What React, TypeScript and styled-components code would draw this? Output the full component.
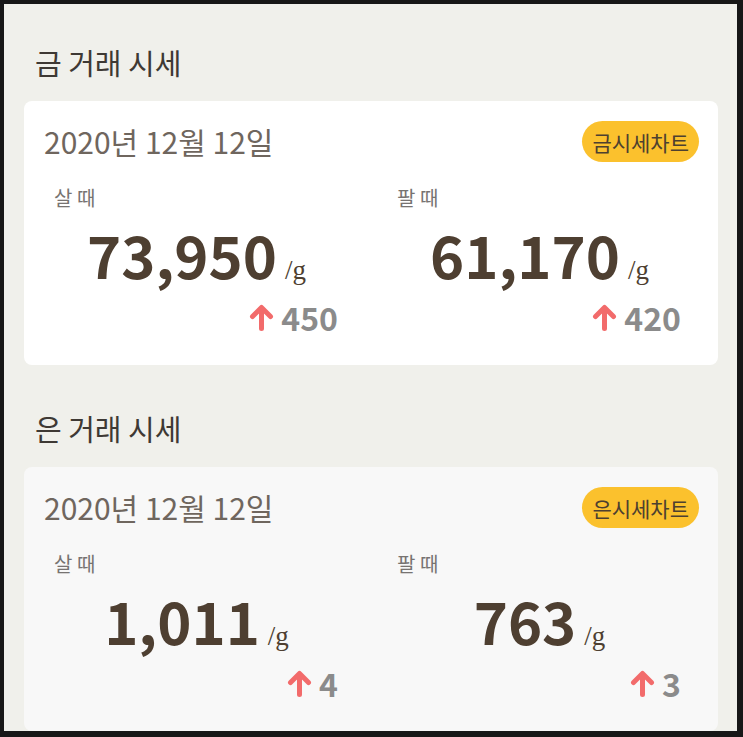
import styled, { createGlobalStyle } from 'styled-components'

const GlobalStyle = createGlobalStyle`
  html, body {
    margin: 0;
    padding: 0;
    background: #171717;
  }
  body {
    font-family: 'Noto Sans CJK KR', 'Noto Sans', sans-serif;
  }
`

const Screen = styled.div`
  box-sizing: border-box;
  margin: 4px 6px 0 4px;
  height: 727px;
  overflow: hidden;
  background: #f0f0eb;
  padding: 40px 19px 0 20px;
  display: flex;
  flex-direction: column;
  gap: 45px;
`

const Section = styled.section`
  display: flex;
  flex-direction: column;
`

const Title = styled.h2`
  margin: 0 0 21px 11px;
  font-size: 29px;
  line-height: 36px;
  font-weight: 400;
  color: #3e3934;
`

interface CardProps {
  muted?: boolean
}

const Card = styled.div<CardProps>`
  box-sizing: border-box;
  border-radius: 8px;
  padding: 20px 19px 30px 20px;
  background: ${(props) => (props.muted ? '#f8f8f8' : '#ffffff')};
`

const CardHeader = styled.div`
  display: flex;
  justify-content: space-between;
  align-items: center;
  height: 41px;
`

const DateText = styled.div`
  font-size: 30px;
  line-height: 41px;
  color: #6f665e;
`

const Chip = styled.button`
  height: 41px;
  padding: 0 10px;
  border: none;
  border-radius: 21px;
  background: #fbc12d;
  color: #4d4030;
  font-family: 'Noto Sans CJK KR', sans-serif;
  font-size: 21px;
  cursor: pointer;
`

const Columns = styled.div`
  display: grid;
  grid-template-columns: 305px 305px;
  column-gap: 38px;
`

const Column = styled.div`
  display: flex;
  flex-direction: column;
`

const Label = styled.div`
  margin-top: 24px;
  padding-left: 10px;
  font-size: 20px;
  line-height: 24px;
  color: #777371;
`

const PriceRow = styled.div`
  margin-top: 9px;
  height: 70px;
  display: flex;
  justify-content: center;
  align-items: baseline;
  gap: 8px;
  color: #4e3f31;
`

const Price = styled.span`
  font-family: 'Noto Sans CJK KR', sans-serif;
  font-weight: 700;
  font-size: 58px;
  line-height: 70px;
`

const Unit = styled.span`
  font-family: 'Liberation Serif', serif;
  font-size: 27px;
`

const ChangeRow = styled.div`
  margin-top: 10px;
  height: 36px;
  padding-right: 11px;
  display: flex;
  justify-content: flex-end;
  align-items: center;
  gap: 7px;
`

const ChangeValue = styled.span`
  font-family: 'Noto Sans CJK KR', sans-serif;
  font-weight: 700;
  font-size: 32px;
  line-height: 36px;
  color: #8b8b8b;
`

const UpArrow = () => (
  <svg width="25" height="27" viewBox="0 0 25 27">
    <path
      d="M12.5 24.5V4M3.5 12.5l9-9 9 9"
      fill="none"
      stroke="#f26b6b"
      strokeWidth="5"
      strokeLinecap="round"
      strokeLinejoin="round"
    />
  </svg>
)

type Quote = {
  label: string
  price: string
  change: string
}

type Market = {
  title: string
  chart: string
  date: string
  muted?: boolean
  quotes: Quote[]
}

const markets: Market[] = [
  {
    title: '금 거래 시세',
    chart: '금시세차트',
    date: '2020년 12월 12일',
    quotes: [
      { label: '살 때', price: '73,950', change: '450' },
      { label: '팔 때', price: '61,170', change: '420' },
    ],
  },
  {
    title: '은 거래 시세',
    chart: '은시세차트',
    date: '2020년 12월 12일',
    muted: true,
    quotes: [
      { label: '살 때', price: '1,011', change: '4' },
      { label: '팔 때', price: '763', change: '3' },
    ],
  },
]

export default function App() {
  return (
    <>
      <GlobalStyle />
      <Screen>
        {markets.map((market) => (
          <Section key={market.title}>
            <Title>{market.title}</Title>
            <Card muted={market.muted}>
              <CardHeader>
                <DateText>{market.date}</DateText>
                <Chip>{market.chart}</Chip>
              </CardHeader>
              <Columns>
                {market.quotes.map((quote) => (
                  <Column key={quote.label}>
                    <Label>{quote.label}</Label>
                    <PriceRow>
                      <Price>{quote.price}</Price>
                      <Unit>/g</Unit>
                    </PriceRow>
                    <ChangeRow>
                      <UpArrow />
                      <ChangeValue>{quote.change}</ChangeValue>
                    </ChangeRow>
                  </Column>
                ))}
              </Columns>
            </Card>
          </Section>
        ))}
      </Screen>
    </>
  )
}
